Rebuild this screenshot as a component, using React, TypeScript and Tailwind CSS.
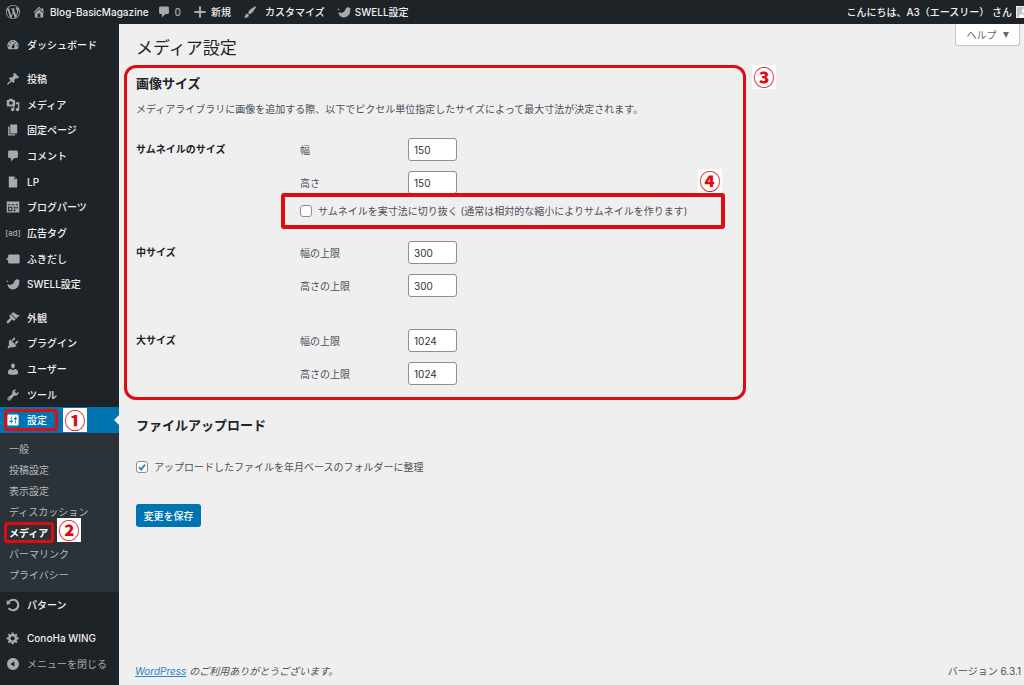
import type { ReactNode } from 'react';
import { clsx } from 'clsx';

const icons = {
  wordpress:
    'M20 10c0-5.51-4.49-10-10-10C4.48 0 0 4.49 0 10c0 5.52 4.48 10 10 10 5.51 0 10-4.48 10-10zM7.78 15.37L4.37 6.22c.55-.02 1.17-.08 1.17-.08.5-.06.44-1.13-.06-1.11 0 0-1.45.11-2.37.11-.18 0-.37 0-.58-.01C4.12 2.69 6.87 1.11 10 1.11c2.33 0 4.45.87 6.05 2.34-.68-.11-1.65.39-1.65 1.58 0 .74.45 1.36.9 2.1.35.61.55 1.36.55 2.46 0 1.49-1.4 5-1.4 5l-3.03-8.37c.54-.02.82-.17.82-.17.5-.05.44-1.25-.06-1.22 0 0-1.44.12-2.38.12-.87 0-2.33-.12-2.33-.12-.5-.03-.56 1.2-.06 1.22l.92.08 1.26 3.41zM17.41 10c.24-.64.74-1.87.43-4.25.7 1.29 1.05 2.71 1.05 4.25 0 3.29-1.73 6.24-4.4 7.78.97-2.59 1.94-5.2 2.92-7.78zM6.1 18.09C3.12 16.65 1.11 13.53 1.11 10c0-1.3.23-2.48.72-3.59C3.25 10.3 4.67 14.2 6.1 18.09zm4.03-6.63l2.58 6.98c-.86.29-1.76.45-2.71.45-.79 0-1.57-.11-2.29-.33.81-2.38 1.62-4.74 2.42-7.1z',
  home: 'M16 8.5l1.53 1.53-1.06 1.06L10 4.6l-6.47 6.49-1.06-1.06L10 2.5l4 4v-2h2v4zm-6-2.46l6 5.99V18H4v-5.97zM12 17v-5H8v5h4z',
  plus: 'M18 8.5v3h-6.5v6.5h-3v-6.5H2v-3h6.5V2h3v6.5z',
  brush:
    'M18.33 3.57s.27-.8-.31-1.36c-.53-.52-1.22-.24-1.22-.24-.61.3-5.76 3.47-7.67 5.57-.86.96-2.06 3.79-1.09 4.82.92.98 3.96-.17 4.79-1 2.06-2.06 5.21-7.17 5.5-7.79zM1.4 17.65c2.37-1.56 1.46-3.41 3.23-4.64.93-.65 2.22-.62 3.08.29.63.67.8 2.57-.16 3.46-1.57 1.45-4 1.55-6.15.89z',
  dashboard:
    'M3.76 16h12.48c1.1-1.37 1.76-3.11 1.76-5 0-4.42-3.58-8-8-8s-8 3.58-8 8c0 1.89.66 3.63 1.76 5zM10 4c.55 0 1 .45 1 1s-.45 1-1 1-1-.45-1-1 .45-1 1-1zM6 6c.55 0 1 .45 1 1s-.45 1-1 1-1-.45-1-1 .45-1 1-1zm8 0c.55 0 1 .45 1 1s-.45 1-1 1-1-.45-1-1 .45-1 1-1zm-5.37 5.55L12 7v6c0 1.1-.9 2-2 2s-2-.9-2-2c0-.57.24-1.08.63-1.45zM4 10c.55 0 1 .45 1 1s-.45 1-1 1-1-.45-1-1 .45-1 1-1zm12 0c.55 0 1 .45 1 1s-.45 1-1 1-1-.45-1-1 .45-1 1-1z',
  post: 'M10.44 3.02l1.82-1.82 6.36 6.35-1.83 1.82c-1.05-.68-2.48-.57-3.41.36l-.75.75c-.92.93-1.04 2.35-.35 3.41l-1.83 1.82-2.41-2.41-2.8 2.79c-.42.42-3.38 2.71-3.8 2.29s1.86-3.39 2.28-3.81l2.79-2.79L4.1 9.36l1.83-1.82c1.05.69 2.48.57 3.4-.36l.75-.75c.93-.92 1.05-2.35.36-3.41z',
  media:
    'M13 11V4c0-.55-.45-1-1-1h-1.67L9 1H5L3.67 3H2c-.55 0-1 .45-1 1v7c0 .55.45 1 1 1h10c.55 0 1-.45 1-1zM7 4.5c1.38 0 2.5 1.12 2.5 2.5S8.38 9.5 7 9.5 4.5 8.38 4.5 7 5.62 4.5 7 4.5zM14 6h5v10.5c0 1.38-1.12 2.5-2.5 2.5S14 17.88 14 16.5s1.12-2.5 2.5-2.5c.17 0 .34.02.5.05V9h-3V6zm-4 8.05V13h2v3.5c0 1.38-1.12 2.5-2.5 2.5S7 17.88 7 16.5 8.12 14 9.5 14c.17 0 .34.02.5.05z',
  page: 'M6 15V2h10v13H6zm-1 1h8v2H3V5h2v11z',
  comment:
    'M5 2h10c1.1 0 2 .9 2 2v7c0 1.1-.9 2-2 2h-3l-5 5v-5H5c-1.1 0-2-.9-2-2V4c0-1.1.9-2 2-2z',
  file: 'M12 2l4 4v12H4V2h8zm0 4h3l-3-3v3z',
  blocks:
    'M1 2h18v16H1V2zm2 4v1.5h3V6H3zm5 0v1.5h4V6H8zm6 0v1.5h3V6h-3zM3 9.5V16h6V9.5H3zm1.5 1.5h3v3.5h-3V11zm6.5-1.5V12h2.5V9.5H11zm4 0V12h2V9.5h-2zm-4 4V16h2.5v-2.5H11z',
  balloon:
    'M5 3.5h12.5c1.1 0 2 .9 2 2v9c0 1.1-.9 2-2 2H5c-1.1 0-2-.9-2-2V12L0 10l3-2V5.500c0-1.1.9-2 2-2z',
  swell:
    'M.5 6l1.700-1 1.300 1.500L2 7.500zM2 10.500c2.500 1 6.500 1 8.500-1.500 1.500-2 1.500-4.500 4-5.500 1.500-.5 3-.2 4 .8l1.200 1.200-.9 1c.8 5.500-3 11.500-9.300 11.500-4 0-7-3-7.500-7.500z',
  appearance:
    'M14.48 11.06L7.41 3.99l1.5-1.5c.5-.56 2.3-.47 3.51.32 1.21.8 1.43 1.28 2.91 2.1 1.18.64 2.45 1.26 4.45.85zm-.71.71L6.7 4.7 4.93 6.47c-.39.39-.39 1.02 0 1.41l1.06 1.06c.39.39.39 1.03 0 1.42-.6.6-1.43 1.11-2.21 1.69-.35.26-.7.53-1.01.84C1.43 14.23.4 16.08 1.4 17.07c.99 1 2.84-.03 4.18-1.36.31-.31.58-.66.85-1.02.57-.78 1.08-1.61 1.69-2.21.39-.39 1.02-.39 1.41 0l1.06 1.06c.39.39 1.02.39 1.41 0z',
  plugins:
    'M13.11 4.36L9.87 7.6 8 5.73l3.24-3.24c.35-.34 1.05-.2 1.56.32.52.51.66 1.21.31 1.55zm-8 1.77l.91-1.12 9.01 9.01-1.19.84c-.71.71-2.63 1.16-3.82 1.16H6.14L4.9 17.26c-.59.59-1.54.59-2.12 0-.59-.58-.59-1.53 0-2.12l1.24-1.24v-3.88c0-1.13.4-3.19 1.09-3.89zm7.26 3.97l3.24-3.24c.34-.35 1.04-.21 1.55.31.52.51.66 1.21.31 1.55l-3.24 3.25z',
  users:
    'M10 9.25c-2.27 0-2.73-3.44-2.73-3.44C7 4.02 7.82 2 9.97 2c2.16 0 2.98 2.02 2.71 3.81 0 0-.41 3.44-2.68 3.44zm0 2.57L12.72 10c2.39 0 4.52 2.33 4.52 4.53v2.49s-3.65 1.13-7.24 1.13c-3.65 0-7.24-1.13-7.24-1.13v-2.49c0-2.25 1.94-4.48 4.47-4.48z',
  tools:
    'M16.68 9.77c-1.34 1.34-3.3 1.67-4.95.99l-5.41 6.52c-.99.99-2.59.99-3.58 0s-.99-2.59 0-3.57l6.52-5.42c-.68-1.65-.35-3.61.99-4.95 1.28-1.28 3.12-1.62 4.72-1.06l-2.89 2.89 2.82 2.82 2.86-2.87c.53 1.58.18 3.39-1.08 4.65zM3.81 16.21c.4.39 1.04.39 1.43 0 .4-.4.4-1.04 0-1.43-.39-.4-1.03-.4-1.43 0-.39.39-.39 1.03 0 1.43z',
  settings:
    'M18 16V4c0-1.1-.9-2-2-2H4c-1.1 0-2 .9-2 2v12c0 1.1.9 2 2 2h12c1.1 0 2-.9 2-2zM8 11h1c.55 0 1 .45 1 1s-.45 1-1 1H8v1.5c0 .28-.22.5-.5.5s-.5-.22-.5-.5V13H6c-.55 0-1-.45-1-1s.45-1 1-1h1V5.5c0-.28.22-.5.5-.5s.5.22.5.5V11zm5-2h-1c-.55 0-1-.45-1-1s.45-1 1-1h1V5.5c0-.28.22-.5.5-.5s.5.22.5.5V7h1c.55 0 1 .45 1 1s-.45 1-1 1h-1v5.5c0 .28-.22.5-.5.5s-.5-.22-.5-.5V9z',
  rotate:
    'M10.25 1.02c5.1 0 8.75 4.04 8.75 9s-3.65 9-8.75 9c-3.2 0-6.02-1.59-7.68-3.99l2.59-1.52c1.1 1.5 2.86 2.51 4.84 2.51 3.3 0 6-2.79 6-6s-2.7-6-6-6c-1.97 0-3.72 1-4.82 2.49L7 8.02l-6 2v-7L2.89 4.6c1.69-2.17 4.36-3.58 7.36-3.58z',
  gear: 'M18 12h-2.18c-.17.7-.44 1.35-.81 1.93l1.54 1.54-2.1 2.1-1.54-1.54c-.58.36-1.23.63-1.91.79V19H8v-2.18c-.68-.16-1.33-.43-1.91-.79l-1.54 1.54-2.12-2.12 1.54-1.54c-.36-.58-.63-1.23-.79-1.91H1V9.03h2.17c.16-.7.44-1.35.8-1.94L2.43 5.55l2.1-2.1 1.54 1.54c.58-.37 1.24-.64 1.93-.81V2h3v2.18c.68.16 1.33.43 1.91.79l1.54-1.54 2.12 2.12-1.54 1.54c.36.59.64 1.24.8 1.94H18V12zm-8.5 1.5c1.66 0 3-1.34 3-3s-1.34-3-3-3-3 1.34-3 3 1.34 3 3 3z',
  collapse:
    'M10 1.5c4.7 0 8.5 3.8 8.5 8.5s-3.8 8.5-8.5 8.5-8.5-3.8-8.5-8.5 3.8-8.5 8.5-8.5zm2 12.5V6l-5.5 4z',
};

type IconName = keyof typeof icons;

const Icon = ({ name, className }: { name: IconName; className?: string }) => (
  <svg
    viewBox="0 0 20 20"
    fill="currentColor"
    fillRule="evenodd"
    aria-hidden="true"
    className={clsx('size-[14px] shrink-0', className)}
  >
    <path d={icons[name]} />
  </svg>
);

type MenuEntry = { label: string; icon?: IconName };

const contentMenu: MenuEntry[] = [
  { label: '投稿', icon: 'post' },
  { label: 'メディア', icon: 'media' },
  { label: '固定ページ', icon: 'page' },
  { label: 'コメント', icon: 'comment' },
  { label: 'LP', icon: 'file' },
  { label: 'ブログパーツ', icon: 'blocks' },
  { label: '広告タグ' },
  { label: 'ふきだし', icon: 'balloon' },
  { label: 'SWELL設定', icon: 'swell' },
];

const siteMenu: MenuEntry[] = [
  { label: '外観', icon: 'appearance' },
  { label: 'プラグイン', icon: 'plugins' },
  { label: 'ユーザー', icon: 'users' },
  { label: 'ツール', icon: 'tools' },
  { label: '設定', icon: 'settings' },
];

const settingsMenu = [
  '一般',
  '投稿設定',
  '表示設定',
  'ディスカッション',
  'メディア',
  'パーマリンク',
  'プライバシー',
];

const sizeGroups = [
  {
    id: 'thumbnail',
    title: 'サムネイルのサイズ',
    fields: [
      { id: 'thumbnail_w', label: '幅', value: '150' },
      { id: 'thumbnail_h', label: '高さ', value: '150' },
    ],
  },
  {
    id: 'medium',
    title: '中サイズ',
    fields: [
      { id: 'medium_w', label: '幅の上限', value: '300' },
      { id: 'medium_h', label: '高さの上限', value: '300' },
    ],
  },
  {
    id: 'large',
    title: '大サイズ',
    fields: [
      { id: 'large_w', label: '幅の上限', value: '1024' },
      { id: 'large_h', label: '高さの上限', value: '1024' },
    ],
  },
];

const StepBadge = ({ step, className }: { step: string; className: string }) => (
  <span
    className={clsx(
      "absolute z-10 flex size-6 items-center justify-center bg-white font-['Noto_Sans_CJK_JP',sans-serif] text-[21px] leading-[22px] font-black text-[#df0c12]",
      className
    )}
  >
    <span className="h-6">{step}</span>
  </span>
);

const Frame = ({ className }: { className: string }) => (
  <span
    aria-hidden="true"
    className={clsx('pointer-events-none absolute border-[#df0c12]', className)}
  />
);

const MenuLink = ({
  label,
  icon,
  active,
  muted,
}: MenuEntry & { active?: boolean; muted?: boolean }) => (
  <a
    href="#"
    className={clsx(
      'flex h-[26px] min-h-0 shrink items-center gap-[7px] pl-[6px]',
      active && 'bg-[#0073b1] text-white',
      muted && 'font-normal text-[#a7aaad]'
    )}
  >
    {icon ? (
      <Icon name={icon} className={active ? 'text-white' : 'text-[#a7aaad]'} />
    ) : (
      <span className="flex w-[14px] justify-center text-[8px] whitespace-nowrap text-[#a7aaad]">
        [ad]
      </span>
    )}
    {label}
  </a>
);

const BarLink = ({
  icon,
  children,
  className,
}: {
  icon: IconName;
  children?: ReactNode;
  className?: string;
}) => (
  <a href="#" className={clsx('flex items-center', className)}>
    <Icon name={icon} className="text-[#a7aaad]" />
    {children}
  </a>
);

const AdminBar = () => (
  <header className="flex h-6 items-center overflow-hidden bg-[#1d2327] pl-[6px] font-medium whitespace-nowrap text-[#f0f0f1]">
    <BarLink icon="wordpress" />
    <BarLink icon="home" className="ml-3 gap-1">
      Blog-BasicMagazine
    </BarLink>
    <BarLink icon="comment" className="ml-2 gap-1">
      <span className="text-[#a7aaad]">0</span>
    </BarLink>
    <BarLink icon="plus" className="ml-3 gap-1">
      新規
    </BarLink>
    <BarLink icon="brush" className="ml-3 gap-2">
      カスタマイズ
    </BarLink>
    <BarLink icon="swell" className="ml-3 gap-1">
      SWELL設定
    </BarLink>
    <a href="#" className="ml-auto flex items-center gap-1">
      こんにちは、A3（エースリー） さん
      <span className="flex h-3 w-2 justify-start overflow-hidden border border-r-0 border-[#f0f0f1] bg-[#c3c4c7]">
        <Icon name="users" className="text-white" />
      </span>
    </a>
  </header>
);

const Sidebar = () => (
  <nav
    aria-label="メインメニュー"
    className="w-[119px] shrink-0 bg-[#1d2327] pt-2 pb-2 font-medium text-[#f0f0f1]"
  >
    <MenuLink label="ダッシュボード" icon="dashboard" />
    <div className="mt-2 flex h-[231px] flex-col">
      {contentMenu.map((entry) => (
        <MenuLink key={entry.label} {...entry} />
      ))}
    </div>
    <div className="relative mt-2 flex h-32 flex-col">
      {siteMenu.map((entry) => (
        <MenuLink key={entry.label} {...entry} active={entry.label === '設定'} />
      ))}
      <span className="absolute right-0 bottom-2 border-y-[5px] border-r-[5px] border-y-transparent border-r-[#efefef]" />
      <Frame className="bottom-[2px] left-1 h-[22px] w-[54px] rounded-sm border-[3px]" />
      <StepBadge step="①" className="bottom-px left-[63px]" />
    </div>
    <ul className="bg-[#2c3338] pt-[5px] pb-[7px] font-normal text-[#b4b9be]">
      {settingsMenu.map((label) => (
        <li key={label} className="relative h-[21px]">
          <a
            href="#"
            className={clsx(
              'flex h-full items-center pl-[9px]',
              label === 'メディア' && 'font-bold text-white'
            )}
          >
            {label}
          </a>
          {label === 'メディア' && (
            <>
              <Frame className="inset-y-0 left-1 w-[50px] rounded-sm border-[3px]" />
              <StepBadge step="②" className="-top-1 left-[57px]" />
            </>
          )}
        </li>
      ))}
    </ul>
    <MenuLink label="パターン" icon="rotate" />
    <div className="mt-[7px]">
      <MenuLink label="ConoHa WING" icon="gear" />
      <MenuLink label="メニューを閉じる" icon="collapse" muted />
    </div>
  </nav>
);

const Checkbox = ({
  id,
  checked,
  children,
}: {
  id: string;
  checked?: boolean;
  children: ReactNode;
}) => (
  <label htmlFor={id} className="flex h-5 items-center gap-[6px] whitespace-nowrap">
    <span className="relative flex">
      <input
        id={id}
        type="checkbox"
        defaultChecked={checked}
        className="peer size-3 appearance-none rounded-[3px] border border-[#8c8f94] bg-white"
      />
      <svg
        viewBox="0 0 12 12"
        className="pointer-events-none absolute inset-0 hidden size-3 fill-none stroke-[#2a86c4] stroke-2 peer-checked:block"
      >
        <path d="M3 6.2l2.3 2.3L9 3.5" />
      </svg>
    </span>
    {children}
  </label>
);

const ImageSizes = () => (
  <section className="relative ml-[5px] w-full max-w-[622px] pt-[9px] pr-3 pb-[15px] pl-3">
    <h2 className="text-[13px] leading-[18px] font-bold text-[#1d2327]">画像サイズ</h2>
    <p className="mt-[9px] mb-[21px] leading-4 whitespace-nowrap">
      メディアライブラリに画像を追加する際、以下でピクセル単位指定したサイズによって最大寸法が決定されます。
    </p>
    {sizeGroups.map((group, index) => (
      <div
        key={group.id}
        role="group"
        aria-labelledby={`${group.id}_title`}
        className={clsx(
          'grid grid-cols-[164px_1fr]',
          index === 1 && 'mt-5',
          index === 2 && 'mt-8'
        )}
      >
        <h3 id={`${group.id}_title`} className="leading-[22px] font-bold text-[#1d2327]">
          {group.title}
        </h3>
        <div>
          <div className="flex flex-col gap-[10px]">
            {group.fields.map((field) => (
              <div key={field.id} className="flex h-[23px] items-center">
                <label htmlFor={field.id} className="w-[108px]">
                  {field.label}
                </label>
                <input
                  id={field.id}
                  type="text"
                  defaultValue={field.value}
                  className="h-[23px] w-[49px] rounded-[3px] border border-[#8c8f94] bg-white px-[5px] text-[#2c3338]"
                />
              </div>
            ))}
          </div>
          {index === 0 && (
            <div className="relative mt-[7px]">
              <Checkbox id="thumbnail_crop">
                サムネイルを実寸法に切り抜く (通常は相対的な縮小によりサムネイルを作ります)
              </Checkbox>
              <Frame className="-top-2 right-[9px] -bottom-2 -left-[19px] rounded-[3px] border-4" />
              <StepBadge step="④" className="-top-8 right-3" />
            </div>
          )}
        </div>
      </div>
    ))}
    <Frame className="inset-0 rounded-xl border-[3px]" />
    <StepBadge step="③" className="top-0 -right-[30px]" />
  </section>
);

export default function App() {
  return (
    <div className="flex min-h-screen flex-col bg-[#efefef] font-['Inter','Noto_Sans_CJK_JP',sans-serif] text-[10px] leading-4 text-[#4a5158]">
      <AdminBar />
      <div className="flex flex-1">
        <Sidebar />
        <div className="flex min-w-0 flex-1 flex-col">
          <main className="relative">
            <h1 className="mt-[10px] mb-[3px] ml-[17px] text-[17px] leading-7 text-[#1d2327]">
              メディア設定
            </h1>
            <button
              type="button"
              className="absolute top-0 right-1 flex h-[22px] w-[65px] items-center justify-center gap-[6px] rounded-b-[3px] border border-t-0 border-[#c3c4c7] bg-white text-[#646970]"
            >
              ヘルプ
              <svg viewBox="0 0 6 6" className="size-[6px] fill-current" aria-hidden="true">
                <path d="M0 0h6L3 6z" />
              </svg>
            </button>
            <form onSubmit={(event) => event.preventDefault()}>
              <ImageSizes />
              <section className="ml-[17px]">
                <h2 className="mt-4 mb-[23px] text-[13px] leading-[18px] font-bold text-[#1d2327]">
                  ファイルアップロード
                </h2>
                <Checkbox id="uploads_yearmonth" checked>
                  アップロードしたファイルを年月ベースのフォルダーに整理
                </Checkbox>
                <button
                  type="submit"
                  className="mt-[27px] h-[23px] w-[65px] rounded-[3px] bg-[#0073b1] font-medium text-white"
                >
                  変更を保存
                </button>
              </section>
            </form>
          </main>
          <footer className="mt-auto flex justify-between pt-5 pr-[3px] pb-[6px] pl-4">
            <p className="italic">
              <a href="#" className="text-[#2a86c4] underline">
                WordPress
              </a>{' '}
              のご利用ありがとうございます。
            </p>
            <p>バージョン 6.3.1</p>
          </footer>
        </div>
      </div>
    </div>
  );
}
